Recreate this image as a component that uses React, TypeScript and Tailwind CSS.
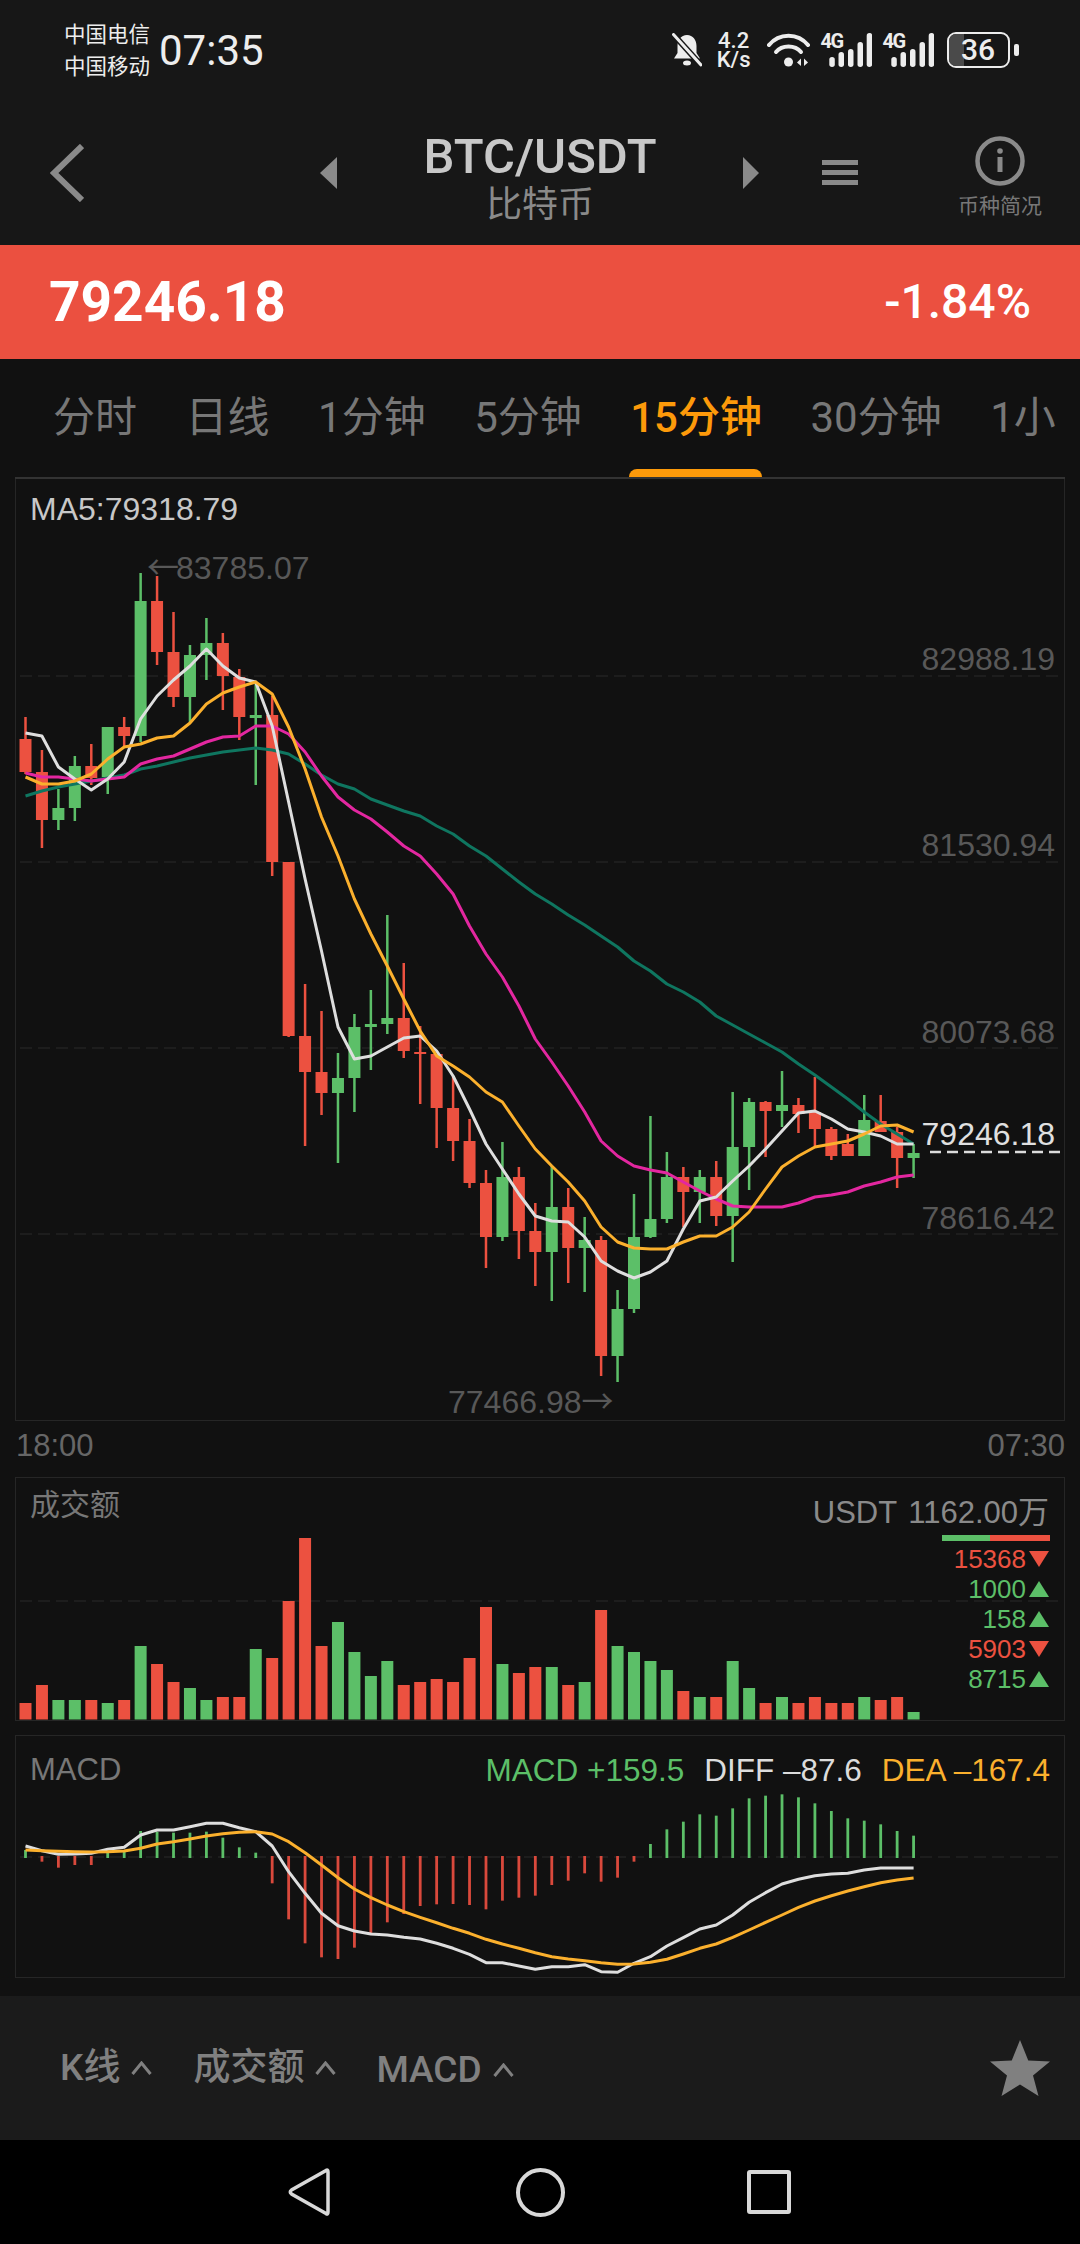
const stepX = 16.446
const cx = (i: number) => 25.5 + stepX * i

// [red?, high, low, bodyTop, bodyBottom] in page pixels
const candles: [number, number, number, number, number][] = [
  [1, 718, 775, 740, 773], [1, 751, 849, 773, 821], [0, 790, 831, 809, 821], [0, 757, 822, 767, 809],
  [1, 745, 786, 767, 779], [0, 728, 795, 728, 778], [1, 718, 748, 728, 737], [0, 574, 743, 602, 737],
  [1, 577, 666, 602, 653], [1, 613, 708, 653, 698], [0, 646, 723, 656, 698], [0, 619, 681, 644, 656],
  [1, 634, 711, 644, 677], [1, 670, 741, 678, 718], [0, 683, 786, 716, 719], [1, 697, 877, 716, 863],
  [1, 863, 1038, 863, 1037], [1, 985, 1147, 1037, 1073], [1, 1012, 1116, 1073, 1094], [0, 1054, 1164, 1079, 1094],
  [0, 1015, 1113, 1028, 1079], [0, 991, 1071, 1025, 1028], [0, 916, 1035, 1019, 1025], [1, 964, 1059, 1019, 1052],
  [1, 1027, 1105, 1053, 1055], [1, 1055, 1149, 1055, 1109], [1, 1077, 1162, 1109, 1142], [1, 1120, 1189, 1142, 1184],
  [1, 1171, 1269, 1184, 1238], [0, 1143, 1242, 1178, 1238], [1, 1168, 1260, 1178, 1232], [1, 1204, 1287, 1232, 1253],
  [0, 1167, 1302, 1208, 1253], [1, 1189, 1284, 1208, 1249], [0, 1218, 1293, 1241, 1249], [1, 1237, 1377, 1241, 1357],
  [0, 1291, 1383, 1310, 1357], [0, 1195, 1314, 1238, 1310], [0, 1117, 1239, 1220, 1238], [0, 1153, 1224, 1178, 1220],
  [1, 1168, 1228, 1178, 1193], [0, 1171, 1224, 1178, 1193], [1, 1162, 1227, 1178, 1217], [0, 1093, 1263, 1148, 1217],
  [0, 1099, 1191, 1103, 1148], [1, 1102, 1158, 1103, 1112], [0, 1072, 1128, 1106, 1112], [1, 1099, 1134, 1106, 1115],
  [1, 1078, 1147, 1113, 1130], [1, 1128, 1161, 1130, 1157], [1, 1135, 1157, 1145, 1157], [0, 1096, 1157, 1121, 1157],
  [1, 1096, 1133, 1122, 1133], [1, 1128, 1189, 1133, 1159], [0, 1145, 1179, 1154, 1159],
]

const ma5 = [734, 737, 768, 780, 791, 780, 763, 720, 697, 681, 667, 650, 667, 679, 683, 727, 803, 880, 952, 1028, 1060, 1057, 1048, 1039, 1037, 1052, 1077, 1110, 1145, 1170, 1195, 1217, 1222, 1223, 1238, 1262, 1272, 1279, 1273, 1262, 1230, 1202, 1198, 1182, 1167, 1150, 1132, 1114, 1112, 1120, 1130, 1133, 1137, 1145, 1145]
const ma10 = [778, 785, 785, 782, 775, 760, 748, 745, 739, 737, 724, 705, 694, 688, 683, 695, 728, 770, 818, 857, 900, 935, 967, 1000, 1032, 1057, 1067, 1078, 1093, 1103, 1127, 1150, 1167, 1183, 1202, 1228, 1243, 1249, 1250, 1250, 1243, 1237, 1237, 1228, 1213, 1190, 1168, 1157, 1148, 1145, 1142, 1135, 1127, 1126, 1133]
const ma20 = [774, 778, 778, 780, 782, 780, 778, 765, 760, 757, 750, 743, 738, 737, 727, 727, 735, 753, 777, 798, 811, 820, 833, 847, 857, 875, 895, 927, 955, 978, 1007, 1040, 1063, 1087, 1113, 1142, 1157, 1167, 1171, 1174, 1183, 1192, 1200, 1207, 1208, 1208, 1208, 1204, 1198, 1196, 1193, 1187, 1183, 1178, 1176]
const ma30 = [797, 792, 788, 785, 782, 779, 776, 770, 767, 763, 759, 756, 753, 751, 749, 751, 755, 765, 776, 785, 790, 800, 806, 812, 817, 827, 835, 847, 857, 870, 883, 895, 905, 916, 926, 937, 948, 962, 972, 985, 993, 1003, 1017, 1026, 1035, 1044, 1053, 1065, 1076, 1088, 1100, 1113, 1125, 1135, 1145]

// volume bar tops, red flag
const volumes: [number, number][] = [
  [1, 699], [1, 645], [0, 690], [0, 690], [1, 690], [0, 699], [1, 690], [0, 528], [1, 582], [1, 636], [0, 654],
  [0, 690], [1, 681], [1, 681], [0, 537], [1, 564], [1, 393], [1, 204], [1, 528], [0, 456], [0, 546], [0, 618],
  [0, 573], [1, 645], [1, 636], [1, 627], [1, 636], [1, 564], [1, 411], [0, 582], [1, 609], [1, 591], [0, 591],
  [1, 645], [0, 636], [1, 420], [0, 528], [0, 546], [0, 573], [0, 600], [1, 663], [0, 681], [1, 681], [0, 573],
  [0, 654], [1, 699], [0, 681], [1, 699], [1, 681], [1, 699], [1, 699], [0, 681], [1, 690], [1, 681], [0, 726],
]

const macdBars = [360, 395, 413, 405, 405, 365, 365, 303, 305, 308, 308, 305, 323, 352, 368, 460, 568, 640, 682, 687, 653, 610, 577, 552, 528, 523, 522, 525, 538, 512, 503, 497, 465, 452, 430, 455, 443, 395, 342, 298, 275, 253, 257, 235, 205, 197, 193, 202, 220, 243, 265, 272, 283, 303, 317]
const diff = [348, 362, 373, 372, 370, 358, 352, 315, 300, 300, 290, 280, 280, 293, 305, 348, 425, 490, 550, 587, 603, 612, 615, 622, 627, 640, 655, 673, 698, 698, 708, 718, 710, 710, 704, 725, 727, 700, 680, 648, 623, 597, 585, 555, 517, 488, 462, 448, 437, 432, 430, 420, 414, 414, 414]
const dea = [360, 362, 364, 365, 366, 365, 363, 355, 342, 335, 327, 318, 311, 307, 305, 312, 335, 368, 405, 443, 477, 503, 525, 545, 562, 578, 595, 610, 628, 642, 655, 668, 680, 687, 692, 698, 703, 702, 697, 688, 672, 655, 642, 622, 600, 577, 555, 532, 513, 497, 483, 470, 458, 450, 444]

const RED = '#ec5140'
const GREEN = '#5cbf68'
const ORANGE = '#fbb02d'

const linePoints = (ys: number[]) => ys.map((y, i) => `${cx(i).toFixed(1)},${y}`).join(' ')

function GridLine({ y }: { y: number }) {
  return <line x1="20" x2="1060" y1={y} y2={y} stroke="#2a2a2a" strokeWidth="1" strokeDasharray="12 6" />
}

function KlineChart() {
  return (
    <svg className="absolute inset-0" width="1048" height="940" viewBox="16 480 1048 940">
      {[677, 863, 1049, 1235].map((y) => <GridLine key={y} y={y} />)}
      {candles.map(([red, high, low, top, bottom], i) => (
        <g key={i} fill={red ? RED : GREEN}>
          <rect x={cx(i) - 1.25} y={high} width="2.5" height={low - high} />
          <rect x={cx(i) - 6} y={top} width="12" height={bottom - top} />
        </g>
      ))}
      <polyline points={linePoints(ma30)} fill="none" stroke="#0f7660" strokeWidth="3" strokeLinejoin="round" />
      <polyline points={linePoints(ma20)} fill="none" stroke="#e327a0" strokeWidth="3" strokeLinejoin="round" />
      <polyline points={linePoints(ma5)} fill="none" stroke="#dedede" strokeWidth="3" strokeLinejoin="round" />
      <polyline points={linePoints(ma10)} fill="none" stroke={ORANGE} strokeWidth="3" strokeLinejoin="round" />
      <line x1="930" x2="1064" y1="1153" y2="1153" stroke="#dcdcdc" strokeWidth="2.5" strokeDasharray="11 6" />
    </svg>
  )
}

function VolumeChart() {
  return (
    <svg className="absolute inset-0" width="1048" height="242" viewBox="16 1478 1048 242">
      <GridLine y={1601} />
      {volumes.map(([red, top], i) => {
        const y = 1470 + top / 3
        return <rect key={i} x={cx(i) - 6} y={y} width="12" height={1719.5 - y} fill={red ? RED : GREEN} />
      })}
    </svg>
  )
}

function MacdChart() {
  const toY = (v: number) => 1730 + v / 3
  const pts = (vals: number[]) => vals.map((v, i) => `${cx(i).toFixed(1)},${toY(v).toFixed(1)}`).join(' ')
  return (
    <svg className="absolute inset-0" width="1048" height="241" viewBox="16 1736 1048 241">
      <GridLine y={1857} />
      {macdBars.map((v, i) => {
        const y = toY(v)
        const up = y < 1857
        return <rect key={i} x={cx(i) - 1.4} y={up ? y : 1856} width="2.8" height={up ? 1858 - y : y - 1856} fill={up ? GREEN : '#d9493c'} />
      })}
      <polyline points={pts(diff)} fill="none" stroke="#dedede" strokeWidth="3" strokeLinejoin="round" />
      <polyline points={pts(dea)} fill="none" stroke={ORANGE} strokeWidth="3" strokeLinejoin="round" />
    </svg>
  )
}

function Triangle({ down }: { down?: boolean }) {
  return (
    <svg width="20" height="16" viewBox="0 0 20 16" className="ml-[3px]">
      <polygon points={down ? '0,0 20,0 10,16' : '10,0 20,16 0,16'} fill={down ? RED : GREEN} />
    </svg>
  )
}

function SignalIcon() {
  return (
    <div className="relative h-[36px] w-[50px]">
      <svg width="50" height="36" viewBox="0 0 50 36">
        {[[7.3, 10], [16.5, 15], [26, 18], [35.5, 25], [44.7, 34]].map(([x, h]) => (
          <rect key={x} x={x} y={35 - h} width="5.5" height={h} rx="2.7" fill="#ededed" />
        ))}
      </svg>
      <span className="absolute -left-px -top-[2px] text-[20px] font-bold leading-[22px] tracking-[-1.5px]">4G</span>
    </div>
  )
}

function StatusBar() {
  return (
    <div className="flex h-[100px] items-start pl-[64px] text-[#ededed] font-['Roboto','Noto_Sans_CJK_SC',sans-serif]">
      <div className="mt-[19px] flex w-[95px] flex-col text-[21.5px] leading-[32px]">
        <span>中国电信</span>
        <span>中国移动</span>
      </div>
      <span className="mt-[27px] text-[42px] leading-[48px]">07:35</span>
      <div className="ml-[408px] mt-[32px] flex h-[36px] items-center">
        <svg width="30" height="34" viewBox="0 0 30 34">
          <path d="M15 2C9 2 5.500 7 5.500 13V20L2 25.500H28L24.500 20V13C24.500 7 21 2 15 2Z" fill="#ededed" />
          <ellipse cx="15" cy="30" rx="4" ry="2.500" fill="#ededed" />
          <line x1="1" y1="1" x2="29" y2="32" stroke="#171717" strokeWidth="6" />
          <line x1="1.500" y1="1.500" x2="29" y2="32" stroke="#ededed" strokeWidth="3" strokeLinecap="round" />
        </svg>
        <div className="ml-[17px] flex w-[30px] flex-col items-center text-[22px] font-medium leading-[19px]">
          <span>4.2</span>
          <span>K/s</span>
        </div>
        <svg className="ml-[18px]" width="43" height="34" viewBox="0 0 43 34">
          <path d="M2 12C12 -0.500 31 -0.500 41 12" fill="none" stroke="#ededed" strokeWidth="4" strokeLinecap="round" />
          <path d="M9 19C15 11.500 28 11.500 34 19" fill="none" stroke="#ededed" strokeWidth="4" strokeLinecap="round" />
          <circle cx="21.500" cy="29" r="4.500" fill="#ededed" />
          <polygon points="30,29.500 34,25.500 34,33" fill="#ededed" />
          <polygon points="41,29.500 37,25.500 37,33" fill="#ededed" />
        </svg>
        <div className="ml-[12px]"><SignalIcon /></div>
        <div className="ml-[12px]"><SignalIcon /></div>
        <div className="relative ml-[13px] flex h-[36px] w-[63px] items-center justify-center overflow-hidden rounded-[9px] border-2 border-[#ededed]">
          <div className="absolute inset-y-0 left-0 w-[15px] bg-[#4a4a4a]" />
          <span className="relative text-[30px] font-medium leading-none">36</span>
        </div>
        <div className="ml-[4px] h-[12px] w-[5px] rounded-[2px] bg-[#ededed]" />
      </div>
    </div>
  )
}

function Header() {
  return (
    <div className="flex h-[145px] items-center text-[#8a8a8a] font-['Roboto','Noto_Sans_CJK_SC',sans-serif]">
      <svg className="ml-[50px]" width="34" height="58" viewBox="0 0 34 58">
        <polyline points="32,2 4,29 32,56" fill="none" stroke="#8a8a8a" strokeWidth="6" />
      </svg>
      <svg className="ml-[236px]" width="17" height="32" viewBox="0 0 17 32">
        <polygon points="17,0 17,32 0,16" fill="#8a8a8a" />
      </svg>
      <div className="flex w-[406px] flex-col items-center pt-[10px]">
        <span className="text-[49px] font-medium leading-[47px] text-[#c8c8c8]">BTC/USDT</span>
        <span className="mt-[7px] text-[36px] leading-[36px]">比特币</span>
      </div>
      <svg width="16" height="32" viewBox="0 0 16 32">
        <polygon points="0,0 16,16 0,32" fill="#8a8a8a" />
      </svg>
      <div className="ml-[63px] flex w-[36px] flex-col gap-[5px]">
        <div className="h-[5px] bg-[#8a8a8a]" />
        <div className="h-[5px] bg-[#8a8a8a]" />
        <div className="h-[5px] bg-[#8a8a8a]" />
      </div>
      <div className="ml-[99px] flex w-[86px] flex-col items-center pt-[9px]">
        <svg width="50" height="50" viewBox="0 0 50 50">
          <circle cx="25" cy="25" r="22.500" fill="none" stroke="#8a8a8a" strokeWidth="4.500" />
          <circle cx="25" cy="15" r="2.800" fill="#8a8a8a" />
          <rect x="22.500" y="21" width="5" height="15" fill="#8a8a8a" />
        </svg>
        <span className="mt-[8px] text-[21px] leading-[24px] text-[#777]">币种简况</span>
      </div>
    </div>
  )
}

const tabs = ['分时', '日线', '1分钟', '5分钟', '15分钟', '30分钟', '1小']

function Tabs() {
  return (
    <div className="flex h-[118px] items-start gap-[48.5px] overflow-hidden pl-[53px] pt-[36px] text-[42px] leading-[46px] font-['Roboto','Noto_Sans_CJK_SC',sans-serif]">
      {tabs.map((t) => (
        <span key={t} className={t === '15分钟' ? 'relative font-medium text-[#fd9a0a]' : 'text-[#777]'}>
          {t}
          {t === '15分钟' && <span className="absolute -bottom-[36px] -left-px right-0 h-[8px] rounded-t-[8px] bg-[#fd9a0a]" />}
        </span>
      ))}
    </div>
  )
}

function ToolItem({ label, className }: { label: string; className?: string }) {
  return (
    <div className={`flex items-center ${className ?? ''}`}>
      <span className="text-[37px] font-medium leading-[40px] text-[#808080]">{label}</span>
      <svg className="ml-[11px]" width="21" height="14" viewBox="0 0 21 14">
        <polyline points="1.500,13 10.500,2 19.500,13" fill="none" stroke="#808080" strokeWidth="3" />
      </svg>
    </div>
  )
}

export default function App() {
  return (
    <div className="flex h-[2244px] w-[1080px] flex-col overflow-hidden bg-[#111111] font-['Liberation_Sans','Noto_Sans_CJK_SC',sans-serif]">
      <div className="h-[245px] bg-[#171717]">
        <StatusBar />
        <Header />
      </div>

      <div className="flex h-[114px] items-center justify-between bg-[#eb5040] pl-[49px] pr-[49px] font-['Roboto',sans-serif] text-white">
        <span className="text-[55px] font-bold leading-none">79246.18</span>
        <span className="text-[48px] font-medium leading-none">-1.84%</span>
      </div>

      <Tabs />

      <div className="mx-[15px] h-[2px] bg-[#333333]" />

      {/* K line */}
      <div className="relative mx-[15px] h-[942px] border border-t-0 border-[#262626] text-[32px] leading-[32px]">
        <KlineChart />
        <span className="absolute left-[14px] top-[14px] text-[#c8c8c8]">MA5:79318.79</span>
        <span className="absolute left-[131px] top-[70px] text-[#585858]"><span className="mr-[-3px] font-['Noto_Sans_CJK_SC']">←</span>83785.07</span>
        <span className="absolute left-[432px] top-[904px] text-[#585858]">77466.98<span className="font-['Noto_Sans_CJK_SC']">→</span></span>
        <span className="absolute right-[9px] top-[164px] text-[#585858]">82988.19</span>
        <span className="absolute right-[9px] top-[350px] text-[#585858]">81530.94</span>
        <span className="absolute right-[9px] top-[537px] text-[#585858]">80073.68</span>
        <span className="absolute right-[9px] top-[639px] text-[#e0e0e0]">79246.18</span>
        <span className="absolute right-[9px] top-[723px] text-[#585858]">78616.42</span>
      </div>

      <div className="flex h-[56px] items-center justify-between pb-[5px] pl-[16px] pr-[15px] text-[31px] text-[#666]">
        <span>18:00</span>
        <span>07:30</span>
      </div>

      {/* Volume */}
      <div className="relative mx-[15px] h-[244px] border border-[#262626]">
        <VolumeChart />
        <span className="absolute left-[14px] top-[12px] text-[30px] leading-[30px] text-[#777]">成交额</span>
        <div className="absolute right-[15px] top-[19px] flex flex-col items-end">
          <span className="text-[31px] leading-[31px] text-[#8a8a8a] [word-spacing:3px]">USDT 1162.00万</span>
          <div className="mr-[-1px] mt-[7px] flex h-[6px] w-[108px]">
            <div className="w-[48px] bg-[#5cbf68]" />
            <div className="flex-1 bg-[#ec5140]" />
          </div>
          <div className="mt-[3px] flex flex-col items-end text-[26px] leading-[30px]">
            <div className="flex items-center text-[#ec5140]">15368<Triangle down /></div>
            <div className="flex items-center text-[#5cbf68]">1000<Triangle /></div>
            <div className="flex items-center text-[#5cbf68]">158<Triangle /></div>
            <div className="flex items-center text-[#ec5140]">5903<Triangle down /></div>
            <div className="flex items-center text-[#5cbf68]">8715<Triangle /></div>
          </div>
        </div>
      </div>

      {/* MACD */}
      <div className="relative mx-[15px] mt-[14px] h-[243px] border border-[#262626] leading-[32px]">
        <MacdChart />
        <span className="absolute left-[14px] top-[18px] text-[31px] text-[#777]">MACD</span>
        <div className="absolute right-[14px] top-[18px] flex gap-[20px] whitespace-pre text-[31.5px]">
          <span className="text-[#5cbf68]">MACD +159.5</span>
          <span className="text-[#dcdcdc]">DIFF –87.6</span>
          <span className="text-[#fbb02d]">DEA –167.4</span>
        </div>
      </div>

      {/* bottom tools */}
      <div className="mt-[18px] flex h-[144px] items-center bg-[#1b1b1b] pl-[60px] font-['Roboto','Noto_Sans_CJK_SC',sans-serif]">
        <ToolItem label="K线" />
        <ToolItem label="成交额" className="ml-[41px]" />
        <ToolItem label="MACD" className="ml-[40px] mt-[4px]" />
        <svg className="ml-auto mr-[30px]" width="60" height="56" viewBox="0 0 24 22.400">
          <polygon points="12,0 15.300,8.200 24,8.600 17.200,14.200 19.400,22.400 12,17.800 4.600,22.400 6.800,14.200 0,8.600 8.700,8.200" fill="#808080" />
        </svg>
      </div>

      {/* android nav */}
      <div className="flex flex-1 items-center bg-black pl-[288px]">
        <svg width="42" height="50" viewBox="0 0 42 50">
          <path d="M38 3.500Q40 2 40 5V45Q40 48 38 46.500L3.500 27Q1 25 3.500 23Z" fill="none" stroke="#d8d8d8" strokeWidth="3.500" />
        </svg>
        <div className="ml-[186px] h-[49px] w-[49px] rounded-full border-[4px] border-[#d8d8d8]" />
        <div className="ml-[182px] h-[44px] w-[44px] rounded-[3px] border-[4px] border-[#d8d8d8]" />
      </div>
    </div>
  )
}
